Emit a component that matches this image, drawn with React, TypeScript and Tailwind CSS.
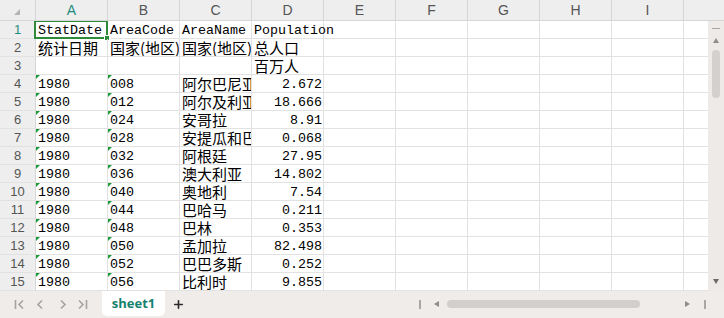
import type { ReactNode } from "react";
import { Plus } from "lucide-react";

const COLS = ["A", "B", "C", "D", "E", "F", "G", "H", "I"];

const NAMES = [
  "阿尔巴尼亚",
  "阿尔及利亚",
  "安哥拉",
  "安提瓜和巴布达",
  "阿根廷",
  "澳大利亚",
  "奥地利",
  "巴哈马",
  "巴林",
  "孟加拉",
  "巴巴多斯",
  "比利时",
];
const CODES = ["008", "012", "024", "028", "032", "036", "040", "044", "048", "050", "052", "056"];
const POP = ["2.672", "18.666", "8.91", "0.068", "27.95", "14.802", "7.54", "0.211", "0.353", "82.498", "0.252", "9.855"];

type Cell = { v?: string; num?: boolean; flag?: boolean; spill?: boolean };

const rows: Cell[][] = [
  [{ v: "StatDate" }, { v: "AreaCode" }, { v: "AreaName" }, { v: "Population", spill: true }],
  [{ v: "统计日期" }, { v: "国家(地区)代码" }, { v: "国家(地区)名称" }, { v: "总人口" }],
  [{}, {}, {}, { v: "百万人" }],
  ...NAMES.map((n, i) => [
    { v: "1980", flag: true },
    { v: CODES[i], flag: true },
    { v: n },
    { v: POP[i], num: true },
  ]),
];

const isCjk = (s?: string) => !!s && /[\u4e00-\u9fff]/.test(s);

// brackets in the sheet font are half-width, wider than Noto's
function text(s?: string): ReactNode {
  if (!s || !isCjk(s) || !/[()]/.test(s)) return s;
  return s.split(/([()])/).map((p, i) =>
    p === "(" || p === ")" ? (
      <span key={i} className="inline-block w-[8px] text-center">
        {p}
      </span>
    ) : (
      p
    )
  );
}

function DataCell({ cell, selected }: { cell?: Cell; selected?: boolean }) {
  const c = cell ?? {};
  return (
    <div
      className={
        "relative flex h-full w-[72px] shrink-0 items-end whitespace-nowrap border-r border-[#e2e2e2] pl-[2px] pr-[1px] text-black " +
        (c.spill || selected ? "overflow-visible " : "overflow-hidden ") +
        (c.num ? "justify-end " : "justify-start ") +
        (isCjk(c.v)
          ? "font-['Noto_Sans_CJK_SC',sans-serif] text-[15px] leading-[17px]"
          : "font-['Liberation_Mono','Noto_Sans_CJK_SC',monospace] text-[13.33px] leading-[15px]")
      }
    >
      {c.flag && (
        <span className="absolute left-0 top-0 h-0 w-0 border-r-[4px] border-t-[4px] border-r-transparent border-t-[#1c9a3a]" />
      )}
      {text(c.v)}
      {selected && (
        <span className="pointer-events-none absolute -left-[2px] -top-[1px] h-[19px] w-[74px] border-2 border-[#2f8a3a]">
          <span className="absolute -bottom-[4px] -right-[4px] h-[6px] w-[6px] border border-white bg-[#2f8a3a]" />
        </span>
      )}
    </div>
  );
}

function VScroll() {
  return (
    <div className="flex w-[16px] shrink-0 flex-col items-center bg-[#eeeae7] pt-[7px]">
      <div className="h-[1px] w-[8px] bg-[#a9a6a4]" />
      <div className="mt-[9px] h-0 w-0 border-x-[3px] border-b-[5px] border-x-transparent border-b-[#8f8c8a]" />
      <div className="mt-[7px] h-[48px] w-[8px] rounded-full bg-[#d4d0ce]" />
      <div className="flex-1" />
      <div className="mb-[7px] h-0 w-0 border-x-[3px] border-t-[5px] border-x-transparent border-t-[#6e6b69]" />
    </div>
  );
}

function SheetBar() {
  const nav = "text-[#a3a3a3]";
  return (
    <div className="flex h-[27px] items-start bg-[#efecea]">
      <div className="flex h-[26px] w-[102px] items-center pl-[14px] font-['Liberation_Sans',sans-serif] text-[14px]">
        <span className={nav + " flex w-[21px] items-center"}>
          <svg width="11" height="11" viewBox="0 0 11 11" fill="none" stroke="currentColor" strokeWidth="1.6">
            <path d="M1.5 1v9M9 1.5 5 5.5l4 4" />
          </svg>
        </span>
        <span className={nav + " flex w-[22px] items-center pl-[1px]"}>
          <svg width="8" height="11" viewBox="0 0 8 11" fill="none" stroke="currentColor" strokeWidth="1.6">
            <path d="M6 1.5 2 5.5l4 4" />
          </svg>
        </span>
        <span className={nav + " flex w-[20px] items-center pl-[2px]"}>
          <svg width="8" height="11" viewBox="0 0 8 11" fill="none" stroke="currentColor" strokeWidth="1.6">
            <path d="M2 1.5l4 4-4 4" />
          </svg>
        </span>
        <span className={nav + " flex items-center"}>
          <svg width="11" height="11" viewBox="0 0 11 11" fill="none" stroke="currentColor" strokeWidth="1.6">
            <path d="M2 1.5l4 4-4 4M9.5 1v9" />
          </svg>
        </span>
      </div>
      <div className="flex h-[25px] w-[63px] items-center justify-center rounded-b-[5px] bg-white font-['Open_Sans',sans-serif] text-[13px] font-bold text-[#16806f]">
        sheet1
      </div>
      <div className="flex h-[26px] w-[26px] items-center justify-center text-[#2b2b2b]">
        <Plus size={13} strokeWidth={3} />
      </div>
      <div className="flex-1" />
      <div className="flex h-[26px] w-[305px] items-center">
        <div className="h-[9px] w-[2px] bg-[#a9a6a4]" />
        <div className="ml-[13px] h-0 w-0 border-y-[3px] border-r-[5px] border-y-transparent border-r-[#8f8c8a]" />
        <div className="ml-[8px] h-[8px] w-[193px] rounded-full bg-[#d2cfcd]" />
        <div className="flex-1" />
        <div className="mr-[14px] h-0 w-0 border-y-[3px] border-l-[5px] border-y-transparent border-l-[#8f8c8a]" />
        <div className="mr-[18px] h-[9px] w-[2px] bg-[#a9a6a4]" />
      </div>
    </div>
  );
}

export default function App() {
  return (
    <div className="flex h-[318px] w-[724px] flex-col overflow-hidden bg-white">
      <div className="flex h-[21px] shrink-0 border-b border-[#d6d6d6] bg-[#eeeeee] font-['Liberation_Sans',sans-serif] text-[14px] text-[#555]">
        <div className="relative w-[36px] shrink-0 border-r border-[#d6d6d6]">
          <span className="absolute bottom-[5px] right-[15px] h-0 w-0 border-b-[6px] border-l-[6px] border-l-transparent border-b-[#b5b5b5]" />
        </div>
        {COLS.map((c) => (
          <div
            key={c}
            className={
              "flex w-[72px] shrink-0 items-center justify-center border-r border-[#d6d6d6] pt-[1px] " +
              (c === "A" ? "text-[#1f8d7d]" : "")
            }
          >
            {c}
          </div>
        ))}
        <div className="flex-1" />
      </div>

      <div className="flex h-[270px] shrink-0">
        <div className="w-[708px] overflow-hidden">
          {Array.from({ length: 15 }, (_, r) => (
            <div key={r} className="flex h-[18px] border-b border-[#e2e2e2]">
              <div
                className={
                  "flex w-[36px] shrink-0 items-center justify-center border-r border-[#d6d6d6] bg-[#eeeeee] pt-[1px] font-['Liberation_Sans',sans-serif] text-[13px] " +
                  (r === 0 ? "text-[#1f8d7d]" : "text-[#555]")
                }
              >
                {r + 1}
              </div>
              {COLS.map((c, ci) => (
                <DataCell key={c} cell={rows[r][ci]} selected={r === 0 && ci === 0} />
              ))}
              <div className="flex-1" />
            </div>
          ))}
        </div>
        <VScroll />
      </div>

      <SheetBar />
    </div>
  );
}
